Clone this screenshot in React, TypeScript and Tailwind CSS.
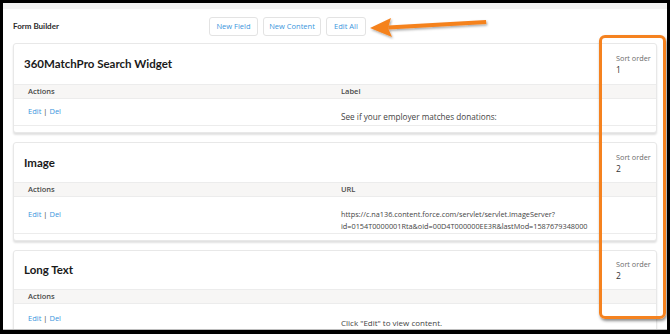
const font = { fontFamily: '"Open Sans", "Noto Sans", sans-serif' };
const heading = { fontFamily: 'Lato, "Open Sans", sans-serif' };

type Item = {
  title: string;
  sort: number;
  column: string;
  value: string[];
  topPad: string;
  rowH: string;
  valuePad: string;
  valueSize: string;
};

const items: Item[] = [
  {
    title: "360MatchPro Search Widget",
    sort: 1,
    column: "Label",
    value: ["See if your employer matches donations:"],
    topPad: "h-[40px]",
    rowH: "h-[26px]",
    valuePad: "pt-[12px]",
    valueSize: "text-[8.2px]",
  },
  {
    title: "Image",
    sort: 2,
    column: "URL",
    value: [
      "https://c.na136.content.force.com/servlet/servlet.ImageServer?",
      "id=0154T0000001Rta&oid=00D4T000000EE3R&lastMod=1587679348000",
    ],
    topPad: "h-[39px]",
    rowH: "h-[36px]",
    valuePad: "pt-[11px]",
    valueSize: "text-[7.3px]",
  },
  {
    title: "Long Text",
    sort: 2,
    column: "",
    value: ['Click "Edit" to view content.'],
    topPad: "h-[38px]",
    rowH: "h-[30px]",
    valuePad: "pt-[13px]",
    valueSize: "text-[8px]",
  },
];

function Card({ item }: { item: Item }) {
  return (
    <section className="mx-[10px] mb-[9px] rounded-[3px] border border-[#e8e8e8] bg-white shadow-[0_2px_2px_rgba(0,0,0,0.12)]">
      <div className={`flex items-center justify-between pl-[10px] ${item.topPad}`}>
        <h2 style={heading} className="text-[11.5px] font-bold text-[#1a1a1a]">
          {item.title}
        </h2>
        <div className="w-[40px] text-[7.3px] leading-[12px] text-[#6b6b6b]">
          <div>Sort order</div>
          <div className="text-[8.5px] text-[#333]">{item.sort}</div>
        </div>
      </div>
      <div className="grid h-[15px] grid-cols-[313px_1fr] items-center border-y border-[#ececec] bg-[#f7f6f5] pl-[14px] text-[7.5px] font-semibold text-[#4a4a4a]">
        <span>Actions</span>
        <span>{item.column}</span>
      </div>
      <div className={`grid grid-cols-[313px_1fr] pl-[14px] text-[7.5px] ${item.rowH}`}>
        <div className="flex items-center text-[#3a96dd]">
          Edit <span className="mx-[2px] text-[#333]">|</span> Del
        </div>
        <div className={`${item.valuePad} ${item.valueSize} leading-[12px] text-[#444]`}>
          {item.value.map((v) => (
            <div key={v}>{v}</div>
          ))}
        </div>
      </div>
      <div className="h-[7px] border-t border-[#ececec]" />
    </section>
  );
}

export default function App() {
  return (
    <div style={font} className="relative h-[334px] w-[670px] overflow-hidden bg-black pb-[4px] pl-[3px] pr-[3px] pt-[3px]">
      <div className="h-full overflow-hidden border-b border-[#bdbdbd] bg-white">
        <div className="h-[6px] bg-[#f3f3f3]" />
        <header className="relative flex h-[34px] items-center px-[10px]">
          <h1 style={heading} className="text-[8px] font-bold text-[#2b2b2b]">
            Form Builder
          </h1>
          <div className="absolute left-[206px] top-[8px] flex gap-[5px] text-[7.5px] text-[#3a96dd]">
            <button className="h-[19px] w-[49px] rounded-[3px] border border-[#e3e3e3] bg-white">New Field</button>
            <button className="h-[19px] w-[58px] rounded-[3px] border border-[#e3e3e3] bg-white">New Content</button>
            <button className="h-[19px] w-[40px] rounded-[3px] border border-[#e3e3e3] bg-white">Edit All</button>
          </div>
        </header>
        {items.map((it) => (
          <Card key={it.title} item={it} />
        ))}
      </div>

      <div className="absolute left-[599px] top-[35px] h-[284px] w-[67px] rounded-[6px] border-[3px] border-[#f5821f] shadow-[1px_2px_3px_rgba(0,0,0,0.45)]" />

      <svg className="absolute left-[366px] top-[14px]" width="126" height="26" viewBox="0 0 126 26">
        <defs>
          <filter id="sh" x="-10%" y="-50%" width="120%" height="200%">
            <feDropShadow dx="1" dy="1.5" stdDeviation="1" floodColor="#000" floodOpacity="0.35" />
          </filter>
        </defs>
        <g filter="url(#sh)" fill="#f5821f">
          <path d="M22 11.5 L120 6 L120.3 10 L22.3 15.5 Z" />
          <path d="M4 14 L25 4 L22 14 L26 23 Z" />
        </g>
      </svg>
    </div>
  );
}
